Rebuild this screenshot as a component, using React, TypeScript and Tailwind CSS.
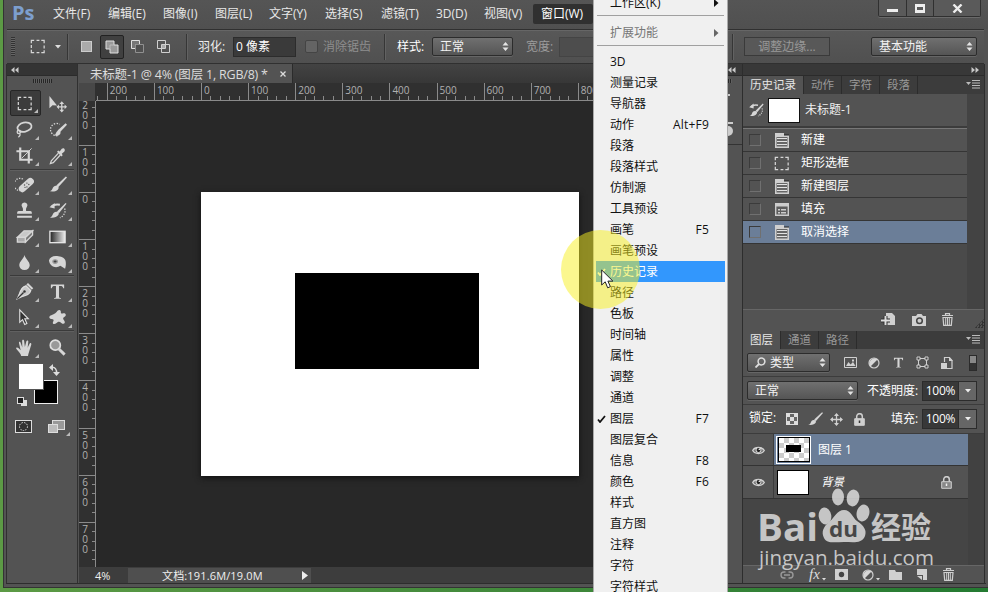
import type { ReactNode } from "react";

const menus = [
  { label: "文件(F)", w: "w-[55px]" },
  { label: "编辑(E)", w: "w-[55px]" },
  { label: "图像(I)", w: "w-[52px]" },
  { label: "图层(L)", w: "w-[54px]" },
  { label: "文字(Y)", w: "w-[56px]" },
  { label: "选择(S)", w: "w-[56px]" },
  { label: "滤镜(T)", w: "w-[55px]" },
  { label: "3D(D)", w: "w-[48px]" },
  { label: "视图(V)", w: "w-[49px]" },
];

const windowItems = [
  { label: "3D" },
  { label: "测量记录" },
  { label: "导航器" },
  { label: "动作", key: "Alt+F9" },
  { label: "段落" },
  { label: "段落样式" },
  { label: "仿制源" },
  { label: "工具预设" },
  { label: "画笔", key: "F5" },
  { label: "画笔预设" },
  { label: "历史记录", active: true, checked: true },
  { label: "路径" },
  { label: "色板" },
  { label: "时间轴" },
  { label: "属性" },
  { label: "调整" },
  { label: "通道" },
  { label: "图层", key: "F7", checked: true },
  { label: "图层复合" },
  { label: "信息", key: "F8" },
  { label: "颜色", key: "F6" },
  { label: "样式" },
  { label: "直方图" },
  { label: "注释" },
  { label: "字符" },
  { label: "字符样式" },
];

function Icon({ children, size = 20, className = "" }: { children: ReactNode; size?: number; className?: string }) {
  return (
    <svg width={size} height={size} viewBox="0 0 20 20" fill="none" stroke="#d6d6d6" strokeWidth="1.4" className={`shrink-0 ${className}`}>
      {children}
    </svg>
  );
}

const light = { fill: "#d6d6d6", stroke: "none" };

const Marquee = () => <path d="M3.500 6.500v-3h3M9 3.500h3M14 3.500h3v3M17 9v3M17 14v2.500h-3M12 16.500H9M6.500 16.500h-3v-3M3.500 11.500v-3" strokeWidth="1.300" />;

const Move = () => (
  <g {...light}>
    <path d="M1.500 2v13l3.300-3.200 4.700.2z" />
    <path d="M14.500 7.500l2.500 3h-1.800v2.300h2.300V11l2.500 2.500-2.500 2.500v-1.800h-2.300v2.300H17l-2.500 3-2.500-3h1.800v-2.300h-2.300V16L9 13.500l2.500-2.500v1.800h2.300v-2.300H12z" />
  </g>
);

const Lasso = () => (
  <>
    <ellipse cx="10" cy="7.500" rx="7.500" ry="4.800" transform="rotate(-12 10 7.500)" strokeWidth="1.800" />
    <circle cx="4" cy="12.500" r="1.700" />
    <path d="M4.500 14c1.500 1 1 3-1 4" />
  </>
);

const QuickSelect = () => (
  <>
    <path d="M10 16.500a6.500 6.500 0 1 1 2.500-12" strokeDasharray="1.500 1.500" />
    <path {...light} d="M18.500 3.500l1.500 1.500-7.500 8-2.500-2z" />
    <path {...light} d="M13 12c1 3.500-2.500 5.500-7 4 2 0 2-2 3-3.500 1-1.700 3-1.500 4-.5z" />
  </>
);

const Crop = () => (
  <>
    <path d="M5.500 1.500v13h13M1.500 5.500h13v13" strokeWidth="2.300" />
    <path d="M7 13L17.500 2.500" strokeWidth="1" />
  </>
);

const Eyedropper = () => (
  <>
    <path d="M11 7.500l-7.500 8-1 3 3-1 7.500-8" strokeWidth="1.300" />
    <path {...light} d="M9.500 6l1.300-1.300 1.500 1.200L14.500 3c2-2 4.500 1 2.500 3l-2.500 2.200 1 1.500L14 11z" />
  </>
);

const Heal = () => (
  <>
    <path d="M6 16.500A6.500 6.500 0 1 1 9.500 5" strokeDasharray="1.400 1.400" />
    <rect {...light} x="2.500" y="6.700" width="18.500" height="7.500" rx="3.500" transform="rotate(-42 12 10.200)" />
    <path d="M10 10.500h.1M12.500 12.500h.1M12.500 8.500h.1M10.500 13h.1M14.500 10h.1" stroke="#555" strokeLinecap="round" />
  </>
);

const Brush = () => (
  <g {...light}>
    <path d="M18.800 1.500L9 10.700l2 2L20 2.500z" />
    <path d="M8.300 11.200c2-.5 3.500 1.300 2.700 3.200-1.300 2.800-5.300 3.300-9.500 2.800 2.500-.7 3-2 3.500-3.500.5-1.500 1.800-2.300 3.300-2.500z" />
  </g>
);

const Stamp = () => (
  <path {...light} d="M10 1.500a3 3 0 0 1 2.300 5c-.7 1-.8 2-.6 4H16c1.200 0 1.800.7 1.800 3H2.200c0-2.300.6-3 1.800-3h4.300c.2-2 .1-3-.6-4a3 3 0 0 1 2.300-5zM2.200 15.500h15.600v2H2.200z" />
);

const HistoryBrush = () => (
  <>
    <path d="M3.500 6c3-3 6-2.500 9-2" strokeWidth="2" />
    <path {...light} d="M1.500 6.500L7 2v6z" />
    <path {...light} d="M18.500 2L9.500 11l2 1.800L19.500 3z" />
    <path {...light} d="M8.700 11.200c2.300-.2 3.300 1.600 2.300 3.300-1.500 2.800-5.500 3.500-9 3 2-.7 2.700-2.300 3.200-3.800.5-1.500 1.800-2.400 3.500-2.500z" />
    <path d="M17.500 8c1.500 4-1 8-5 9.500" strokeDasharray="1.400 1.400" />
  </>
);

const Eraser = () => (
  <>
    <path d="M9.500 4h9l-7.500 7H2.500z" fill="#c8c8c8" stroke="#d6d6d6" />
    <path d="M2.500 11h8.500v5H2.500z" fill="#aaa" stroke="#d6d6d6" />
    <path d="M11 11l7.500-7v4.500L11 16z" fill="#777" stroke="#d6d6d6" />
  </>
);

const GradientTool = () => (
  <>
    <defs>
      <linearGradient id="toolGradient">
        <stop stopColor="#222" />
        <stop offset="1" stopColor="#eee" />
      </linearGradient>
    </defs>
    <rect x="2" y="4.500" width="16" height="12" fill="url(#toolGradient)" stroke="#e6e6e6" />
  </>
);

const Drop = () => <path {...light} d="M10 2c1 4.500 5.500 6.500 5.500 11a5.500 5 0 0 1-11 0C4.500 8.500 9 6.500 10 2z" />;

const Dodge = () => (
  <>
    <path {...light} d="M1 8c1-4 5-5.500 10-4.500 4 .7 7 2 7.500 5 .5 2.500.5 5-.5 8l-5-3c-4 3-11 1.500-12-5.500z" />
    <ellipse cx="7.500" cy="9" rx="2.300" ry="1.800" fill="#444" stroke="#999" />
  </>
);

const Pen = () => (
  <>
    <path {...light} d="M12 2.500l1.700-1.500 5.500 5.500-1.500 1.700z" />
    <path d="M11.500 4l5 5c-1 4-4 5-9.500 6.500L2.500 17.500l2-4.500C6 8 7.500 5 11.500 4z" fill="#c7c7c7" stroke="#ddd" />
    <path d="M2.500 17.500l6.500-6.500" stroke="#333" />
    <circle cx="10" cy="10" r="1.300" fill="#333" stroke="none" />
  </>
);

const TypeIcon = () => (
  <path {...light} d="M3 2.500h14v4h-1c-.3-1.800-1.200-2.400-3-2.400h-1.400v11.500c0 1 .6 1.300 2 1.300v.8H6.400v-.8c1.400 0 2-.3 2-1.300V4.100H7c-1.800 0-2.700.6-3 2.400H3z" />
);

const PathArrow = () => <path d="M5 2v13l3-2.700 2.200 5 2.300-1-2.200-5H14z" fill="#333" stroke="#ddd" strokeWidth="1.200" />;

const Shape = () => (
  <path {...light} d="M10 3c2-2 4-.5 3.500 1.500 0 1 .5 1.500 2 1.200 3-.8 4.500 2 2 3.500-2 1.200-2 2-.5 4 2 2.800-.5 4.500-3 2.500-2-1.700-3-1.800-5 .2-2.500 2.200-5 .5-3.500-1.800 1-1.800.5-2.300-2-2.600-3-.5-2.500-3.500 0-4 3.500-.7 5.500-3 6.500-4.500z" />
);

const Hand = () => (
  <path
    {...light}
    d="M6.500 19c-.3-2.500-3-5-5-7.500-1-1.500.8-2.200 2-1l2.500 2.300-1.800-7.300c-.4-1.700 1.300-2 1.700-.5l1.800 5L7.500 3c0-1.700 2-1.700 2.100 0l.8 6.500L12 3.500c.5-1.600 2.200-1.100 2 .5l-.7 6.300 2-4.300c.8-1.300 2.300-.5 1.800 1L15 14c-.5 2-1.200 3.500-1.300 5z"
  />
);

const Zoom = () => (
  <>
    <circle cx="7.700" cy="7.500" r="5.300" fill="#999" stroke="#ddd" strokeWidth="1.800" />
    <path d="M11.500 11.500l6 6" strokeWidth="3" />
  </>
);

const toolGroups = [
  [Marquee, Move, Lasso, QuickSelect, Crop, Eyedropper],
  [Heal, Brush, Stamp, HistoryBrush, Eraser, GradientTool, Drop, Dodge],
  [Pen, TypeIcon, PathArrow, Shape],
  [Hand, Zoom],
];

const groupGaps = ["", "mt-px", "mb-px", "mb-[2px]"];

function Corner() {
  return (
    <svg width="4" height="4" className="absolute right-[2px] bottom-[2px]">
      <path d="M4 0v4H0z" fill="#bbb" />
    </svg>
  );
}

function Grip({ className = "" }: { className?: string }) {
  return <div className={`bg-[repeating-linear-gradient(90deg,#262626_0_1px,#606060_1px_2px)] ${className}`} />;
}

function Arrows() {
  return (
    <svg width="7" height="11" className="shrink-0">
      <path d="M0.500 4.500L3.500 1l3 3.500zM.5 6.500l3 3.500 3-3.500z" fill="#e4e4e4" />
    </svg>
  );
}

function Select({ children, className = "" }: { children: ReactNode; className?: string }) {
  return (
    <div className={`flex h-[19px] shrink-0 items-center justify-between rounded-[2px] border border-[#2c2c2c] bg-linear-to-b from-[#707070] to-[#555] px-[7px] pr-[3px] text-[#f2f2f2] shadow-[0_1px_0_#666] ${className}`}>
      {children}
      <Arrows />
    </div>
  );
}

function Sep({ className = "" }: { className?: string }) {
  return <div className={`h-[26px] w-[2px] shrink-0 border-r border-[#626262] bg-[#363636] ${className}`} />;
}

function DoubleArrow({ flip = false }: { flip?: boolean }) {
  return (
    <svg width="8" height="6" className={flip ? "rotate-180" : ""}>
      <path d="M3.500 0v6L0 3zM7.500 0v6L4 3z" fill="#c8c8c8" />
    </svg>
  );
}

function MenuBar() {
  return (
    <div className="flex h-[29px] shrink-0 bg-linear-to-b from-[#555] to-[#505050] pl-[8px]">
      <div className="w-[41px] text-[20px] leading-[25px] font-bold text-[#7d9fce]">Ps</div>
      {menus.map((m) => (
        <div key={m.label} className={`${m.w} shrink-0 leading-[28px] text-[#e8e8e8]`}>{m.label}</div>
      ))}
      <div className="mt-[4px] h-[20px] w-[60px] shrink-0 rounded-[2px] bg-[#303030] pl-[8px] leading-[20px] text-white">窗口(W)</div>
      <div className="ml-[285px] flex h-[17px] w-[103px] shrink-0 rounded-b-[2px] border border-t-0 border-[#303030] bg-[#5a5a5a] shadow-[0_1px_0_#6a6a6a]">
        <div className="flex w-[28px] items-end justify-center border-r border-[#303030] pb-[4px]">
          <div className="h-[3px] w-[11px] bg-[#eee]" />
        </div>
        <div className="flex w-[27px] items-center justify-center border-r border-[#303030]">
          <div className="h-[9px] w-[10px] border-[3px] border-x-2 border-[#eee]" />
        </div>
        <div className="flex flex-1 items-center justify-center">
          <svg width="11" height="9">
            <path d="M1.500 0.500l8 8M9.500 0.500l-8 8" stroke="#eee" strokeWidth="2.400" />
          </svg>
        </div>
      </div>
    </div>
  );
}

function OptionsBar() {
  return (
    <div className="ml-[3px] flex h-[35px] w-[977px] shrink-0 items-center border-y border-[#303030] bg-linear-to-b from-[#585858] to-[#505050] shadow-[inset_0_1px_0_#666]">
      <div className="ml-[4px] h-[19px] w-[4px] bg-[repeating-linear-gradient(#333_0_1px,#666_1px_2px)]" />
      <Icon size={19} className="ml-[13px]"><Marquee /></Icon>
      <svg width="6" height="4" className="ml-[8px]"><path d="M0 0h6L3 3.500z" fill="#ddd" /></svg>
      <Sep className="ml-[6px]" />
      <div className="ml-[12px] h-[11px] w-[11px] border border-[#ccc] bg-[#aaa]" />
      <div className="ml-[8px] flex h-[24px] w-[24px] items-center justify-center rounded-[2px] border border-[#222] bg-[#404040]">
        <svg width="14" height="14">
          <path d="M1 1h8v4h4v8H5V9H1z" fill="#999" stroke="#e0e0e0" />
          <path d="M5 9V5h4" fill="none" stroke="#bbb" />
        </svg>
      </div>
      <svg width="14" height="14" className="ml-[7px]">
        <path d="M4.500 8.500h-4v-8h8v4h-4z" fill="#777" stroke="#e0e0e0" />
        <path d="M4.500 4.500h8v8h-8z" fill="#505050" stroke="#909090" />
      </svg>
      <svg width="14" height="14" className="ml-[12px]">
        <path d="M.5.5h8v8h-8zM4.500 4.500h8v8h-8z" fill="none" stroke="#d0d0d0" />
        <path d="M5 5h3v3H5z" fill="#aaa" />
      </svg>
      <Sep className="ml-[15px]" />
      <div className="ml-[10px] w-[35px] shrink-0 text-[#eee]">羽化:</div>
      <div className="h-[20px] w-[63px] shrink-0 border border-[#2c2c2c] bg-[#3a3a3a] pl-[2px] leading-[18px] text-white">0 像素</div>
      <div className="ml-[9px] h-[13px] w-[13px] shrink-0 rounded-[2px] border border-[#444] bg-[#646464]" />
      <div className="ml-[5px] w-[61px] shrink-0 text-[#8e8e8e]">消除锯齿</div>
      <Sep />
      <div className="ml-[11px] w-[35px] shrink-0 text-white">样式:</div>
      <Select className="w-[81px]">正常</Select>
      <div className="ml-[13px] w-[33px] shrink-0 text-[#9c9c9c]">宽度:</div>
      <div className="h-[20px] w-[60px] shrink-0 border border-[#444] bg-[#4d4d4d]" />
      <Sep className="ml-[113px]" />
      <div className="ml-[10px] h-[19px] w-[86px] shrink-0 border border-[#3a3a3a] bg-[#585858] text-center leading-[17px] text-[#999]">调整边缘...</div>
      <Select className="ml-[41px] w-[106px]">基本功能</Select>
    </div>
  );
}

function Toolbox() {
  return (
    <div className="flex w-[72px] shrink-0 flex-col border-x border-[#303030] bg-[#535353]">
      <div className="flex h-[12px] shrink-0 items-center border-b border-[#2b2b2b] bg-[#343434] pl-[4px]">
        <DoubleArrow />
      </div>
      <Grip className="mx-auto mt-[3px] mb-[7px] h-[4px] w-[19px] shrink-0" />
      <div className="flex flex-col pl-[3px]">
        {toolGroups.map((group, g) => (
          <div key={g} className="flex flex-col">
            {g > 0 && <div className={`mr-[3px] h-[2px] border-b border-[#606060] bg-[#3a3a3a] ${groupGaps[g]}`} />}
            <div className="grid grid-cols-[31px_31px] gap-x-[2px]">
              {group.map((Tool, i) => (
                <div
                  key={i}
                  className={`relative flex h-[26px] items-center justify-center ${g === 0 && i === 0 ? "rounded-[2px] border border-[#262626] bg-[#3c3c3c]" : ""}`}
                >
                  <Icon size={19} className="-translate-x-px"><Tool /></Icon>
                  {!(g === 0 && i === 1) && !(g === 3 && i === 1) && <Corner />}
                </div>
              ))}
            </div>
          </div>
        ))}
      </div>
      <div className="mt-[3px] ml-[11px]">
        <svg width="52" height="76" overflow="visible">
          <rect x="16.500" y="17.500" width="23" height="23" fill="#000" stroke="#eee" />
          <rect x="0.500" y="0.500" width="25" height="26" fill="#fff" stroke="#555" />
          <path d="M33 4.500c4-1 6 2 5.500 6" fill="none" stroke="#ddd" strokeWidth="1.500" />
          <path d="M35 1v7l-4-3.500zM35 9h7l-3.500 4z" fill="#ddd" />
          <rect x="3" y="37" width="6" height="6" fill="#ddd" />
          <rect x="-.5" y="34.500" width="6" height="6" fill="#222" stroke="#ddd" />
          <rect x="-2.500" y="57.500" width="16" height="12" fill="#333" stroke="#ddd" />
          <circle cx="5.500" cy="63.500" r="4" fill="none" stroke="#ddd" strokeDasharray="1.500 1.200" />
          <rect x="34.500" y="57.500" width="12" height="9" fill="#999" stroke="#ddd" />
          <rect x="30.500" y="61.500" width="9" height="8" fill="#bbb" stroke="#ddd" />
          <path d="M52 69v4h-4z" fill="#bbb" />
        </svg>
      </div>
    </div>
  );
}

const STEP = 47.1;

function TopRuler() {
  const ticks = Array.from({ length: 56 }, (_, i) => i - 11);
  return (
    <svg width="631" height="18" className="block">
      <rect width="631" height="18" fill="#303030" />
      <rect width="16" height="18" fill="#484848" />
      {ticks.map((t) => {
        const x = Math.round(122 + (t * STEP) / 5) + 0.5;
        return x < 18 ? null : <path key={t} d={`M${x} ${t % 5 === 0 ? 0 : 13}V17`} stroke="#8a8a8a" />;
      })}
      {ticks.filter((t) => t % 5 === 0 && t > -11).map((t) => (
        <text key={t} x={125 + (t * STEP) / 5} y="11" fontSize="10" fill="#b0b0b0">{Math.abs(t * 20)}</text>
      ))}
      <path d="M17 17.500H631" stroke="#8a8a8a" />
    </svg>
  );
}

function SideRuler() {
  const ticks = Array.from({ length: 51 }, (_, i) => i - 10);
  return (
    <svg width="17" height="466" className="block shrink-0">
      <rect width="17" height="466" fill="#303030" />
      {ticks.map((t) => {
        const y = Math.round(91 + (t * STEP) / 5) + 0.5;
        return <path key={t} d={`M${t % 5 === 0 ? 0 : 13} ${y}H17`} stroke="#8a8a8a" />;
      })}
      {ticks.filter((t) => t % 5 === 0).map((t) =>
        String(Math.abs(t * 20)).split("").map((d, i) => (
          <text key={`${t}-${i}`} x="6" y={102 + (t * STEP) / 5 + i * 10} textAnchor="middle" fontSize="10" fill="#b0b0b0">{d}</text>
        ))
      )}
      <path d="M16.500 0V466" stroke="#8a8a8a" />
    </svg>
  );
}

function DocumentArea() {
  return (
    <div className="flex w-[649px] shrink-0 flex-col overflow-hidden">
      <div className="flex h-[19px] shrink-0 bg-linear-to-b from-[#434343] to-[#373737]">
        <div className="flex w-[214px] items-center justify-between border-r border-[#2b2b2b] bg-[#535353] pr-[6px] pl-[11px]">
          <svg width="180" height="19">
            <text x="0" y="15" fontSize="12.500" fill="#dcdcdc" textLength="178">未标题-1 @ 4% (图层 1, RGB/8) *</text>
          </svg>
          <svg width="6" height="6"><path d="M.5.5l5 5M5.500.5l-5 5" stroke="#ddd" strokeWidth="1.300" /></svg>
        </div>
      </div>
      <div className="h-[18px] shrink-0"><TopRuler /></div>
      <div className="flex h-[466px] shrink-0">
        <SideRuler />
        <div className="flex flex-1 items-start bg-[#282828]">
          <div className="mt-[91px] ml-[105px] flex h-[284px] w-[378px] items-start bg-white shadow-[0_2px_6px_#111]">
            <div className="mt-[81px] ml-[94px] h-[96px] w-[184px] bg-black" />
          </div>
        </div>
      </div>
      <div className="flex h-[16px] shrink-0 items-center bg-[#3d3d3d] text-[11px] text-[#f0f0f0]">
        <div className="w-[49px] pl-[16px] leading-none">4%</div>
        <div className="flex h-[15px] w-[183px] items-center bg-[#4f4f4f] pl-[34px]">
          <div className="w-[140px] leading-none tracking-[0.150px]">文档:191.6M/19.0M</div>
          <svg width="6" height="9"><path d="M0 0v9l6-4.500z" fill="#eee" /></svg>
        </div>
      </div>
    </div>
  );
}

function PanelTabs({ tabs, className = "" }: { tabs: string[]; className?: string }) {
  return (
    <div className={`flex h-[18px] shrink-0 bg-[#3c3c3c] text-[11.500px] leading-[18px] ${className}`}>
      {tabs.map((t, i) => (
        <div key={t} className={`border-r border-[#2c2c2c] px-[7px] ${i === 0 ? "bg-[#535353] text-[#e6e6e6]" : "text-[#999]"}`}>{t}</div>
      ))}
      <svg width="14" height="9" className="mt-[4px] mr-[4px] ml-auto">
        <path d="M0 2h5L2.500 5z" fill="#bbb" />
        <path d="M6 .5h8M6 3h8M6 5.500h8M6 8h8" stroke="#bbb" />
      </svg>
    </div>
  );
}

function DocIcon() {
  return (
    <svg width="15" height="15">
      <path d="M0 2V0h9v2h5v13H0z" fill="#cfcfcf" />
      <path d="M9 2h5" stroke="#222" />
      <path d="M1.500 4v9.500h11V4z" fill="#666" />
      <path d="M2 5.500h10M2 8.500h10M2 11.500h10" stroke="#e2e2e2" />
    </svg>
  );
}

function FillIcon() {
  return (
    <svg width="15" height="15">
      <path d="M.7 1.700h12.600v11.600H.7z" fill="#5c5c5c" stroke="#ccc" strokeWidth="1.400" />
      <path d="M1 2h12v2.500H1zM3 7h2v1.500H3zM3 10h2v1.500H3zM6 7h5v1.500H6zM6 10h5v1.500H6z" fill="#ccc" />
    </svg>
  );
}

const history = [
  { label: "新建", icon: <DocIcon /> },
  { label: "矩形选框", icon: <Icon size={19} className="-mx-[3px]"><Marquee /></Icon> },
  { label: "新建图层", icon: <DocIcon /> },
  { label: "填充", icon: <FillIcon /> },
  { label: "取消选择", icon: <DocIcon />, active: true },
];

function Trash() {
  return (
    <svg width="13" height="13">
      <path d="M1 2.500h11M4.500 2V.7h4V2M2 4.500h9l-.7 7.800H2.700z" fill="none" stroke="#cfcfcf" strokeWidth="1.200" />
      <path d="M4.700 5v7M6.500 5v7M8.300 5v7" stroke="#cfcfcf" />
    </svg>
  );
}

function HistoryPanel() {
  return (
    <>
      <PanelTabs tabs={["历史记录", "动作", "字符", "段落"]} />
      <div className="flex h-[215px] shrink-0 bg-[#434343]">
        <div className="w-[224px] bg-[#4a4a4a]">
          <div className="flex h-[32px] items-center bg-[#535353]">
            <Icon size={16} className="ml-[5px]"><HistoryBrush /></Icon>
            <div className="ml-[4px] h-[25px] w-[32px] border border-[#111] bg-white" />
            <div className="ml-[5px] text-[#f0f0f0]">未标题-1</div>
          </div>
          <div className="h-[3px] border-b border-[#777] bg-[#3c3c3c]" />
          {history.map((h) => (
            <div key={h.label} className={`flex h-[23px] items-center border-b border-[#353535] text-white ${h.active ? "bg-[#6b7e98]" : "bg-[#535353]"}`}>
              <div className="ml-[6px] h-[12px] w-[12px] border border-[#3b3b3b] border-r-[#707070] border-b-[#707070]" />
              <div className="ml-[14px] w-[26px]">{h.icon}</div>
              {h.label}
            </div>
          ))}
        </div>
      </div>
      <div className="flex h-[20px] shrink-0 items-center border-t border-[#666] bg-[#535353] pl-[138px]">
        <svg width="15" height="13">
          <path d="M5 0h6l3 3v9H5z" fill="#cfcfcf" />
          <path d="M0 7.500h9M4.500 3v9" stroke="#333" strokeWidth="4" />
          <path d="M0 7.500h9M4.500 3v9" stroke="#ddd" strokeWidth="2" />
        </svg>
        <svg width="15" height="12" className="ml-[17px]">
          <path d="M0 2h4l1.500-2h4L11 2h4v10H0z" fill="#cfcfcf" />
          <circle cx="7.500" cy="6.800" r="2.800" fill="#ccc" stroke="#444" strokeWidth="1.500" />
        </svg>
        <div className="ml-[15px]"><Trash /></div>
        <div className="mt-[8px] ml-[21px] h-[9px] w-[10px] bg-[repeating-conic-gradient(#333_0_25%,transparent_0_50%)] bg-[length:3px_3px] [clip-path:polygon(100%_0,100%_100%,0_100%)]" />
      </div>
    </>
  );
}

function Percent() {
  return (
    <div className="flex h-[20px] w-[55px] shrink-0 border border-[#2c2c2c] bg-[#383838] leading-[18px] text-white">
      <div className="w-[35px] text-center tracking-[-0.200px]">100%</div>
      <div className="flex flex-1 items-center justify-center border-l border-[#2c2c2c] bg-[#666]">
        <svg width="6" height="4"><path d="M0 0h6L3 3.500z" fill="#eee" /></svg>
      </div>
    </div>
  );
}

function Eye() {
  return (
    <svg width="13" height="10" className="shrink-0">
      <path d="M.7 5.500C3 1.500 10 1.500 12.300 5.500 10 9.500 3 9.500.7 5.500z" fill="#777" stroke="#d5d5d5" strokeWidth="1.300" />
      <circle cx="6.500" cy="5" r="2.500" fill="#222" stroke="#ddd" />
      <circle cx="7.300" cy="4.200" r=".8" fill="#fff" />
    </svg>
  );
}

function Lock({ open = false, className = "" }: { open?: boolean; className?: string }) {
  return (
    <svg width="11" height="13" className={className}>
      <path d="M2.700 6V3.500a2.800 2.800 0 0 1 5.600 0V6" fill="none" stroke="#cfcfcf" strokeWidth="1.500" />
      <path d="M.7 5.700h9.600v6.600H.7z" fill={open ? "#888" : "#cfcfcf"} stroke="#cfcfcf" />
      <path d="M5.500 7.500V10" stroke={open ? "#eee" : "#333"} strokeWidth="1.500" />
    </svg>
  );
}

function Adjust() {
  return (
    <svg width="12" height="12">
      <circle cx="6" cy="6" r="5" fill="#555" stroke="#d0d0d0" strokeWidth="1.200" />
      <path d="M2.500 9.500A5 5 0 0 1 9.500 2.500z" fill="#d8d8d8" />
    </svg>
  );
}

function LayersPanel() {
  return (
    <>
      <PanelTabs tabs={["图层", "通道", "路径"]} className="mt-[2px]" />
      <div className="flex h-[28px] shrink-0 items-center border-b border-[#3c3c3c] pl-[4px]">
        <Select className="w-[83px]">
          <span className="flex items-center gap-[4px]">
            <svg width="11" height="11"><circle cx="6.500" cy="4.500" r="3.400" fill="none" stroke="#ddd" strokeWidth="1.500" /><path d="M4 7l-3.500 3.500" stroke="#ddd" strokeWidth="1.800" /></svg>
            类型
          </span>
        </Select>
        <svg width="13" height="11" className="ml-[14px]">
          <path d="M.5.5h12v10H.5z" fill="none" stroke="#d0d0d0" />
          <path d="M2 9l2.500-4 2 2.500L9 5l2.500 4zM8 2.500h2v2H8z" fill="#d0d0d0" />
        </svg>
        <div className="ml-[11px]"><Adjust /></div>
        <Icon size={13} className="ml-[12px]"><TypeIcon /></Icon>
        <svg width="13" height="13" className="ml-[11px]">
          <path d="M2.500 2.500h8v8h-8z" fill="none" stroke="#d0d0d0" />
          <path d="M1 1h3v3H1zM9 1h3v3H9zM1 9h3v3H1zM9 9h3v3H9z" fill="#444" stroke="#d0d0d0" />
        </svg>
        <svg width="13" height="14" className="ml-[11px]">
          <path d="M4.500 6V1.500h5l2.500 3v8H7" fill="none" stroke="#d0d0d0" strokeWidth="1.200" />
          <path d="M1 7h6v6H1zM9 1v4h4z" fill="#d0d0d0" />
        </svg>
        <div className="ml-[16px] h-[16px] w-[8px] border border-[#2b2b2b] bg-linear-to-b from-[#888] from-50% to-[#333] to-50%" />
      </div>
      <div className="flex h-[28px] shrink-0 items-center border-b border-[#3c3c3c] pl-[4px] text-white">
        <Select className="w-[111px]">正常</Select>
        <div className="ml-[9px] w-[55px] shrink-0">不透明度:</div>
        <Percent />
      </div>
      <div className="flex h-[29px] shrink-0 items-center border-b border-[#3c3c3c] pl-[6px] text-white">
        <div className="w-[37px] shrink-0 pb-[3px]">锁定:</div>
        <svg width="12" height="12">
          <path d="M0 0h12v12H0z" fill="#ddd" />
          <path d="M4 1h4v3H4zM1 4h3v4H1zM8 4h3v4H8zM4 8h4v3H4z" fill="#666" />
        </svg>
        <Icon size={16} className="ml-[9px]"><Brush /></Icon>
        <svg width="13" height="13" className="ml-[7px]">
          <path d="M6.500 1v11M1 6.500h11" stroke="#d0d0d0" strokeWidth="1.300" />
          <path d="M6.500 0l2.500 3H4zM6.500 13L4 10h5zM0 6.500L3 4v5zM13 6.500L10 4v5z" fill="#d0d0d0" />
        </svg>
        <Lock className="ml-[11px]" />
        <div className="ml-[26px] w-[31px] shrink-0">填充:</div>
        <Percent />
      </div>
      <div className="flex h-[131px] shrink-0 bg-[#414141]">
        <div className="w-[225px] bg-[#454545]">
          <div className="flex h-[32px] items-center border-b border-[#333] bg-[#6b7e98]">
            <div className="flex h-full w-[31px] items-center justify-center border-r border-[#3c3c3c] bg-[#535353]"><Eye /></div>
            <div className="ml-[2px] flex h-[28px] w-[35px] items-center justify-center border border-white">
              <div className="flex h-[25px] w-[32px] items-center justify-center border border-black bg-white bg-[repeating-conic-gradient(#ccc_0_25%,#fff_0_50%)] bg-[length:10px_10px]">
                <div className="mb-[3px] h-[7px] w-[15px] bg-black" />
              </div>
            </div>
            <div className="ml-[7px] text-white">图层 1</div>
          </div>
          <div className="flex h-[33px] items-center border-b border-[#333] bg-[#535353]">
            <div className="flex h-full w-[31px] items-center justify-center border-r border-[#3c3c3c]"><Eye /></div>
            <div className="ml-[3px] h-[25px] w-[32px] border border-black bg-white" />
            <div className="ml-[12px] text-[11.500px] text-white italic">背景</div>
            <Lock open className="mr-[16px] ml-auto" />
          </div>
        </div>
      </div>
      <div className="flex h-[18px] shrink-0 items-center border-t border-[#666] bg-[#535353] pl-[37px]">
        <svg width="14" height="8">
          <path d="M5.500 1H4a3 3 0 0 0 0 6h1.500M8.500 1H10a3 3 0 0 1 0 6H8.500M4 4h6" fill="none" stroke="#999" strokeWidth="1.400" />
        </svg>
        <div className="ml-[15px] flex w-[26px] items-end [font-family:'Liberation_Serif',serif] text-[15px] leading-none text-[#ddd] italic">
          fx
          <svg width="4" height="3" className="mb-px ml-[2px]"><path d="M0 0h4L2 2.500z" fill="#ddd" /></svg>
        </div>
        <svg width="13" height="11"><path d="M0 0h13v11H0z" fill="#d0d0d0" /><circle cx="6.500" cy="5.500" r="2.700" fill="#444" /></svg>
        <div className="ml-[14px]"><Adjust /></div>
        <svg width="4" height="3" className="mt-[10px] ml-[2px]"><path d="M0 0h4L2 2.500z" fill="#ddd" /></svg>
        <svg width="13" height="10" className="ml-[9px]"><path d="M0 0h6l1 2h6v8H0z" fill="#d0d0d0" /></svg>
        <svg width="10" height="11" className="ml-[15px]"><path d="M0 0h10v11H6V6H0z" fill="#d0d0d0" /><path d="M0 7h5v4z" fill="#d0d0d0" /></svg>
        <div className="ml-[15px]"><Trash /></div>
      </div>
    </>
  );
}

function Check({ color }: { color: string }) {
  return (
    <svg width="9" height="8" className="absolute left-[1px]">
      <path d="M1 4.500l2 2.500 5-6" fill="none" stroke={color} strokeWidth="1.800" />
    </svg>
  );
}

function SubArrow({ color }: { color: string }) {
  return <svg width="5" height="8" className="mr-[8px]"><path d="M0 0v8l4.500-4z" fill={color} /></svg>;
}

function WindowMenu() {
  return (
    <div className="absolute top-0 left-[593px] h-[592px] w-[135px] overflow-hidden border-x border-[#aaa] bg-[#f0f0f0] text-[#111]">
      <div className="-mt-[8px] flex h-[21px] items-center justify-between pl-[16px]">工作区(K)<SubArrow color="#111" /></div>
      <div className="mx-[3px] mt-[2px] h-px bg-[#a0a0a0]" />
      <div className="flex h-[29px] items-center justify-between pt-[4px] pl-[16px] text-[#777]">扩展功能<SubArrow color="#666" /></div>
      <div className="mx-[3px] h-px bg-[#a0a0a0]" />
      <div className="mt-[5px]">
        {windowItems.map((item) => (
          <div key={item.label} className={`relative mx-[2px] flex h-[21px] items-center justify-between pr-[16px] pl-[14px] ${item.active ? "bg-[#3297fd] text-white" : ""}`}>
            {item.checked && <Check color={item.active ? "#fff" : "#111"} />}
            <span>{item.label}</span>
            <span className="tracking-[0.200px]">{item.key}</span>
          </div>
        ))}
      </div>
    </div>
  );
}

function Watermark() {
  return (
    <svg width="190" height="90" className="absolute top-[484px] left-[752px]" fill="#dcdcdc" opacity="0.850">
      <text x="5" y="57" fontSize="37" fontWeight="700" textLength="61" lengthAdjust="spacingAndGlyphs">Bai</text>
      <ellipse cx="73" cy="32" rx="6.300" ry="8.500" transform="rotate(-8 73 32)" />
      <ellipse cx="86" cy="13" rx="6" ry="8.500" />
      <ellipse cx="101" cy="14" rx="6.300" ry="8.500" transform="rotate(10 101 14)" />
      <ellipse cx="111" cy="29" rx="6.300" ry="8.500" transform="rotate(15 111 29)" />
      <path d="M92 26c7 0 8 7 13 11 7 5 10 9 8 15-3 8-12 6-21 6s-17 2-20-4-1-11 6-17c5-4 7-11 14-11z" />
      <text x="77" y="53" fontSize="21" fontWeight="700" fill="#484848" textLength="29" lengthAdjust="spacingAndGlyphs">du</text>
      <text x="119" y="54" fontSize="30" fontWeight="700">经验</text>
      <text x="7" y="81" fontSize="20" fontWeight="500" textLength="175" lengthAdjust="spacingAndGlyphs">jingyan.baidu.com</text>
    </svg>
  );
}

export default function App() {
  return (
    <div className="relative h-[592px] w-[988px] overflow-hidden bg-linear-to-r from-[#5c9a45] to-[#247a32] text-[12px] whitespace-nowrap [font-family:'Open_Sans','Noto_Sans_CJK_SC',sans-serif]">
      <div className="ml-[3px] flex h-[588px] w-[985px] flex-col border-b border-l border-[#333] bg-[#535353]">
        <MenuBar />
        <OptionsBar />
        <div className="ml-[2px] flex h-[520px] w-[980px] shrink-0 border-b border-[#2d2d2d]">
          <Toolbox />
          <div className="ml-px flex">
            <DocumentArea />
          </div>
          <div className="w-[15px] shrink-0 border-r border-[#2d2d2d]">
            <div className="flex h-[12px] items-center border-b border-[#2b2b2b] bg-[#383838]"><DoubleArrow /></div>
            <div className="flex h-[69px] flex-col border-b border-[#333]">
              <Grip className="mt-[3px] h-[4px] w-[4px]" />
              <div className="mt-[11px] h-[2px] w-[2px] bg-[#ccc]" />
              <div className="mt-[26px] h-[2px] w-[5px] bg-[#ccc]" />
              <div className="mt-[2px] h-[10px] w-[5px] rounded-r-full bg-[#ccc]" />
            </div>
          </div>
          <div className="flex w-[242px] shrink-0 flex-col border-r border-[#2d2d2d]">
            <div className="flex h-[12px] shrink-0 items-center justify-end border-b border-[#2b2b2b] bg-[#383838] pr-[5px]">
              <DoubleArrow flip />
            </div>
            <HistoryPanel />
            <LayersPanel />
          </div>
        </div>
      </div>
      <WindowMenu />
      <div className="absolute top-[230px] left-[561px] h-[79px] w-[79px] rounded-full bg-[#f8ef1f]/50" />
      <svg width="13" height="20" className="absolute top-[269px] left-[601px]">
        <path d="M.7 1v15l3.500-3.200 2.500 6 2.700-1.200-2.500-5.500h5z" fill="#fff" stroke="#222" />
      </svg>
      <Watermark />
    </div>
  );
}
